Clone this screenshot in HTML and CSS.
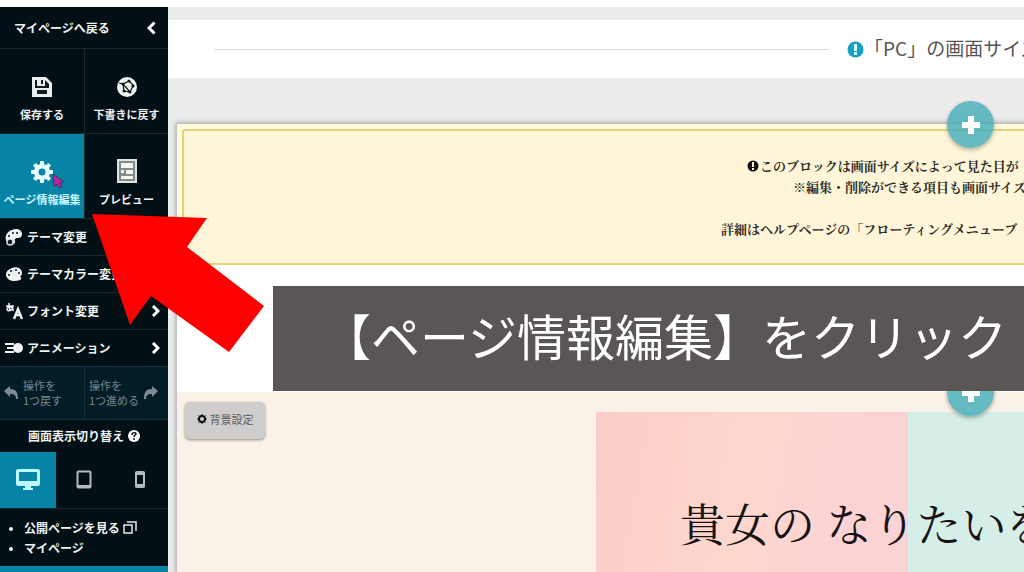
FILE: index.html
```html
<!DOCTYPE html>
<html lang="ja">
<head>
<meta charset="utf-8">
<title>ページ編集</title>
<link rel="stylesheet" href="styles.css">
</head>
<body>
<div class="app">
  <aside class="sidebar">
    <a class="back" href="#">マイページへ戻る
      <svg width="9" height="14" viewBox="0 0 9 14"><path d="M7.500 1.500L2 7l5.500 5.500" fill="none" stroke="#fff" stroke-width="3"/></svg>
    </a>
    <div class="tools">
      <button class="tool">
        <svg width="22" height="22" viewBox="0 0 22 22"><path d="M1 1h14l6 6v14H1z" fill="#e8eded"/><path d="M4 4h2v6h8V4l4 4v10H4z" fill="#101c20"/><path d="M6 3h8v7H6z" fill="#e8eded"/><path d="M10 4h2v4h-2z" fill="#101c20"/><path d="M4 12h14v7H4z" fill="#e8eded"/><path d="M6 14h10v4H6z" fill="#101c20"/></svg>
        保存する
      </button>
      <button class="tool">
        <svg width="22" height="22" viewBox="0 0 22 22"><circle cx="11" cy="11" r="10" fill="#f2f5f5"/><g fill="none" stroke="#0a171b" stroke-width="1.200"><path d="M3 7l4 1 6-3 5 5M7 8l1 7 6 1 3-6M7 8l7 8"/></g><g fill="#0a171b"><circle cx="7" cy="8" r="1.500"/><circle cx="13" cy="5" r="1.500"/><circle cx="17" cy="10" r="1.500"/><circle cx="8" cy="15" r="1.500"/><circle cx="14" cy="16" r="1.500"/></g></svg>
        下書きに戻す
      </button>
      <button class="tool active">
        <svg width="24" height="22" viewBox="0 0 24 22"><g fill="#e9ffff"><circle cx="12" cy="11" r="8"/><rect x="10" y="0" width="4" height="22" rx="1"/><rect x="1" y="9" width="22" height="4" rx="1"/><g transform="rotate(45 12 11)"><rect x="10" y="0" width="4" height="22" rx="1"/><rect x="1" y="9" width="22" height="4" rx="1"/></g></g><circle cx="12" cy="11" r="3.500" fill="#0783a5"/></svg>
        ページ情報編集
        <svg class="cursor" width="14" height="16" viewBox="0 0 14 16"><path d="M1 1l11 8-4 1 2 4-3 1-2-4-3 3z" fill="#b52a9b" stroke="#3d3572"/></svg>
      </button>
      <button class="tool">
        <svg width="20" height="24" viewBox="0 0 20 24"><path d="M0 0h20v24H0z" fill="#dfe2e3"/><path d="M2 2h16v20H2z" fill="#858a8d"/><path d="M4 4h12v5H4zM4 11h3v3H4zM9 11h7v4H9zM4 17h12v3H4z" fill="#f4f4f4"/></svg>
        プレビュー
      </button>
    </div>
    <nav class="menu">
      <a href="#"><svg width="18" height="18" viewBox="0 0 18 18"><path d="M17 6c0-5-6-6-10-4-6 2-8 8-5 12 4 5 9 2 8-1-1-2 1-3 3-3s4-1 4-4z" fill="#f0f3f3"/><g fill="#0a171b"><circle cx="8" cy="5" r="1"/><circle cx="12" cy="5" r="1"/><circle cx="4" cy="8" r="1"/></g><circle cx="5" cy="14" r="3" fill="#0a171b" stroke="#d5dada" stroke-width="1.500"/></svg><span>テーマ変更</span></a>
      <a href="#"><svg width="18" height="18" viewBox="0 0 18 18"><path d="M17 8c0-5-6-7-10-5-6 2-8 7-4 11 4 3 8 2 12 1 2-1 1-3 0-4 1 0 2-1 2-3z" fill="#f0f3f3"/><g fill="#0a171b"><circle cx="6" cy="6" r="1"/><circle cx="11" cy="5" r="1"/><circle cx="4" cy="10" r="1"/><circle cx="14" cy="8" r="1"/></g></svg><span>テーマカラー変更</span></a>
      <a href="#"><svg width="18" height="18" viewBox="0 0 18 18"><g fill="none" stroke="#f0f3f3" stroke-width="1.500"><path d="M1 4h8M4 1c0 5 0 6 2 8M8 5c-1 4-6 5-6 2s7-3 6 2"/><path d="M9 17l4-10 4 10M10 13h6" stroke-width="2.500"/></g></svg><span>フォント変更</span><svg class="chev" width="9" height="12" viewBox="0 0 9 12"><path d="M2 1l5 5-5 5" fill="none" stroke="#fff" stroke-width="3"/></svg></a>
      <a href="#"><svg width="18" height="18" viewBox="0 0 18 18"><path d="M0 5h9M2 9h7M0 13h9" stroke="#f0f3f3" stroke-width="2"/><circle cx="13" cy="9" r="5" fill="#f0f3f3"/></svg><span>アニメーション</span><svg class="chev" width="9" height="12" viewBox="0 0 9 12"><path d="M2 1l5 5-5 5" fill="none" stroke="#fff" stroke-width="3"/></svg></a>
    </nav>
    <div class="history">
      <button><svg width="15" height="14" viewBox="0 0 15 14"><path d="M0 5l6-5v3c6 0 8 3 8 10h-2c0-4-2-5-6-5v3z" fill="#7d8b91"/></svg><span>操作を<br>1つ戻す</span></button>
      <button><span>操作を<br>1つ進める</span><svg width="15" height="14" viewBox="0 0 15 14"><path d="M15 5L9 0v3C3 3 1 6 1 13h2c0-4 2-5 6-5v3z" fill="#7d8b91"/></svg></button>
    </div>
    <div class="view-title">画面表示切り替え <svg width="12" height="12" viewBox="0 0 12 12"><circle cx="6" cy="6" r="6" fill="#fff"/><path d="M4 5c0-3 4-3 4-1 0 1-2 1-2 3M6 8v2" fill="none" stroke="#0a171b" stroke-width="1.500"/></svg></div>
    <div class="views">
      <button class="active" aria-label="PC"><svg width="24" height="22" viewBox="0 0 24 22"><rect x="1.500" y="1.500" width="21" height="14" rx="1" fill="none" stroke="#b9fbff" stroke-width="3"/><path d="M1 12h22v4H1zM9 16h6v3h2v2H7v-2h2z" fill="#b9fbff"/></svg></button>
      <button aria-label="タブレット"><svg width="16" height="20" viewBox="0 0 16 20"><rect x="1.500" y="1.500" width="13" height="16" rx="1" fill="none" stroke="#b5babc" stroke-width="2"/><path d="M1 15h14v3H1z" fill="#b5babc"/></svg></button>
      <button aria-label="スマートフォン"><svg width="12" height="18" viewBox="0 0 12 18"><rect x="2" y="1" width="8" height="15" rx="1" fill="none" stroke="#b5babc" stroke-width="2"/><path d="M1 1h10v3H1zM1 13h10v3H1z" fill="#b5babc"/></svg></button>
    </div>
    <ul class="links">
      <li><a href="#">公開ページを見る <svg width="14" height="13" viewBox="0 0 14 13"><path d="M1 4h8v8H1zM4 1h9v9" fill="none" stroke="#e6eaea" stroke-width="1.500"/></svg></a></li>
      <li><a href="#">マイページ</a></li>
    </ul>
    <div class="sidebar-foot"></div>
  </aside>

  <main class="main">
    <header class="size-note">
      <span class="rule"></span>
      <svg width="17" height="17" viewBox="0 0 17 17"><circle cx="8.500" cy="8.500" r="8" fill="#14a0bf"/><path d="M7 3h3v7H7zM7 11h3v3H7z" fill="#d9ffff"/></svg>
      <span class="size-text">「PC」の画面サイズ</span>
    </header>
    <section class="canvas">
      <div class="notice-wrap">
        <div class="notice">
          <p class="line first"><svg width="12" height="12" viewBox="0 0 12 12"><circle cx="6" cy="6" r="5.500" fill="#111"/><path d="M5 2h2v5H5zM5 8h2v2H5z" fill="#fff6d6"/></svg>このブロックは画面サイズによって見た目が</p>
          <p class="line second">※編集・削除ができる項目も画面サイズ</p>
          <p class="line third">詳細はヘルプページの「フローティングメニューブ</p>
        </div>
        <button class="add" aria-label="追加"><svg width="20" height="20" viewBox="0 0 20 20"><path d="M7 1h6v6h6v6h-6v6H7v-6H1V7h6z" fill="#fff"/></svg></button>
      </div>
      <div class="blank"></div>
      <div class="hero">
        <button class="add" aria-label="追加"><svg width="20" height="20" viewBox="0 0 20 20"><path d="M7 1h6v6h6v6h-6v6H7v-6H1V7h6z" fill="#fff"/></svg></button>
        <button class="bg-button"><svg width="10" height="10" viewBox="0 0 10 10"><circle cx="5" cy="5" r="3" fill="none" stroke="#111" stroke-width="2"/><path d="M5 0v2M5 8v2M0 5h2M8 5h2M1.500 1.500l1 1M7.500 7.500l1 1M8.500 1.500l-1 1M2.500 7.500l-1 1" stroke="#111" stroke-width="1"/></svg>背景設定</button>
        <div class="banner"><h1>貴女の なりたいを</h1></div>
      </div>
    </section>
  </main>
</div>
<div class="caption">【ページ情報編集】をクリック</div>
<svg class="pointer" width="172" height="138" viewBox="0 0 172 138"><path d="M0 0l115 4-20 29 77 59-35 46-78-56-21 29z" fill="#fe0000"/></svg>
</body>
</html>
```
FILE: styles.css
```css
* { box-sizing: border-box; }
body {
  margin: 0;
  height: 100vh;
  overflow: hidden;
  position: relative;
  background: #fff;
  font-family: "Noto Sans CJK JP", sans-serif;
}
button { border: 0; padding: 0; background: none; color: inherit; font: inherit; }
a { color: inherit; text-decoration: none; }
svg { flex: none; }
.app {
  display: grid;
  grid-template-columns: 168px 1fr;
  height: 100%;
  padding-top: 7px;
}

.sidebar {
  display: flex;
  flex-direction: column;
  background: #020f14;
  color: #eef2f2;
  font-size: 12px;
  font-weight: 700;
  line-height: 18px;
  z-index: 1;
}
.back {
  display: flex;
  align-items: center;
  justify-content: space-between;
  height: 41px;
  padding: 0 12px 0 14px;
}
.tools { display: grid; grid-template-columns: 1fr 1fr; grid-auto-rows: 85px; }
.tool {
  position: relative;
  display: flex;
  flex-direction: column;
  align-items: center;
  justify-content: flex-end;
  gap: 7px;
  padding-bottom: 10px;
  border-top: 1px solid #182a30;
  border-left: 1px solid #182a30;
  font-size: 11px;
  line-height: 18px;
  white-space: nowrap;
}
.tool:nth-child(odd) { border-left: 0; }
.tool.active { background: #0783a5; color: #c9f8ff; }
.cursor { position: absolute; left: 52px; top: 39px; }
.menu a {
  display: flex;
  align-items: center;
  gap: 4px;
  height: 37px;
  padding: 0 8px 0 5px;
  border-top: 1px solid #182a30;
}
.menu span { white-space: nowrap; }
.chev { margin-left: auto; }
.history {
  display: grid;
  grid-template-columns: 1fr 1fr;
  height: 54px;
  background: #031d27;
  color: #77868d;
  border-top: 1px solid #17303a;
  border-bottom: 1px solid #17303a;
  font-size: 11px;
  font-weight: 400;
  line-height: 15px;
}
.history button { display: flex; align-items: center; gap: 4px; padding: 0 4px; text-align: left; white-space: nowrap; }
.history button + button { border-left: 1px solid #17303a; }
.view-title { display: flex; align-items: center; justify-content: center; gap: 4px; height: 32px; }
.views { display: grid; grid-template-columns: 1fr 1fr 1fr; height: 57px; border-bottom: 1px solid #182a30; }
.views button { display: flex; align-items: center; justify-content: center; }
.views .active { background: #0783a5; }
.links { margin: 0; padding: 9px 0 8px 24px; line-height: 20px; }
.links li::marker { font-size: 10px; }
.links svg { vertical-align: -1px; }
.sidebar-foot { flex: 1; background: #0783a5; }

.main { display: flex; flex-direction: column; min-width: 0; padding-top: 13px; background: #ececec; overflow: hidden; }
.size-note {
  display: flex;
  align-items: center;
  height: 58px;
  flex: none;
  padding-left: 46px;
  background: #fff;
  color: #555;
}
.rule { flex: 1; height: 1px; background: #dcdcdc; margin-right: 18px; }
.size-text { width: 160px; flex: none; font-size: 19px; line-height: 24px; padding-bottom: 2px; font-weight: 400; white-space: nowrap; overflow: hidden; }
.canvas {
  display: flex;
  flex-direction: column;
  flex: 1;
  margin: 46px 0 0 9px;
  background: #fff;
  box-shadow: 0 0 4px 2px #b9b2b6;
}
.notice-wrap { position: relative; padding: 5px 0 0 5px; background: #fffbdc; }
.notice {
  height: 136px;
  padding-top: 24px;
  border: 2px solid #e3d376;
  border-right: 0;
  border-radius: 3px 0 0 3px;
  background: #fff6da;
  color: #302e28;
  display: flex;
  flex-direction: column;
  align-items: flex-end;
  overflow: hidden;
}
.line { margin: 0; font-family: "Noto Serif CJK JP", "Noto Sans CJK JP", serif; font-size: 13px; line-height: 21px; font-weight: 700; white-space: nowrap; }
.line svg { vertical-align: -1px; margin-right: 1px; }
.first { width: 277px; }
.second { width: 231px; }
.third { width: 303px; margin-top: 21px; }
.add {
  position: absolute;
  right: 30px;
  top: -23px;
  width: 47px;
  height: 47px;
  display: flex;
  align-items: center;
  justify-content: center;
  border-radius: 50%;
  background: rgba(70, 173, 185, 0.82);
  box-shadow: 0 2px 4px rgba(0, 0, 0, 0.3);
}
.blank { height: 127px; }
.hero { position: relative; flex: 1; display: flex; align-items: flex-start; background: #faf1e8; }
.bg-button {
  display: flex;
  align-items: center;
  justify-content: center;
  gap: 3px;
  width: 80px;
  height: 37px;
  margin: 10px 0 0 8px;
  padding-bottom: 3px;
  border-radius: 5px;
  background: #d0cecc;
  box-shadow: 0 1px 3px #908b87;
  color: #5c5a58;
  font-size: 11px;
}
.banner {
  align-self: stretch;
  width: 428px;
  margin: 20px 0 0 auto;
  padding: 80px 0 0 84px;
  overflow: hidden;
  background: linear-gradient(90deg, transparent 312px, #d6eee8 312px), linear-gradient(100deg, #fccdc8, #fdd7cd 35%, #fcd3d5 60%, #fcd3d2);
}
h1 {
  margin: 0;
  font-family: "Noto Serif CJK JP", "Noto Sans CJK JP", serif;
  font-size: 45px;
  line-height: 62px;
  font-weight: 400;
  color: #171314;
  white-space: nowrap;
}
.caption {
  position: absolute;
  z-index: 2;
  top: 286px;
  left: 273px;
  right: 0;
  padding: 13px 0 20px 49px;
  background: #5b5656;
  color: #fff;
  font-size: 49px;
  font-weight: 400;
  line-height: 72px;
  white-space: nowrap;
  overflow: hidden;
}
.pointer { position: absolute; z-index: 3; left: 92px; top: 214px; }
```
